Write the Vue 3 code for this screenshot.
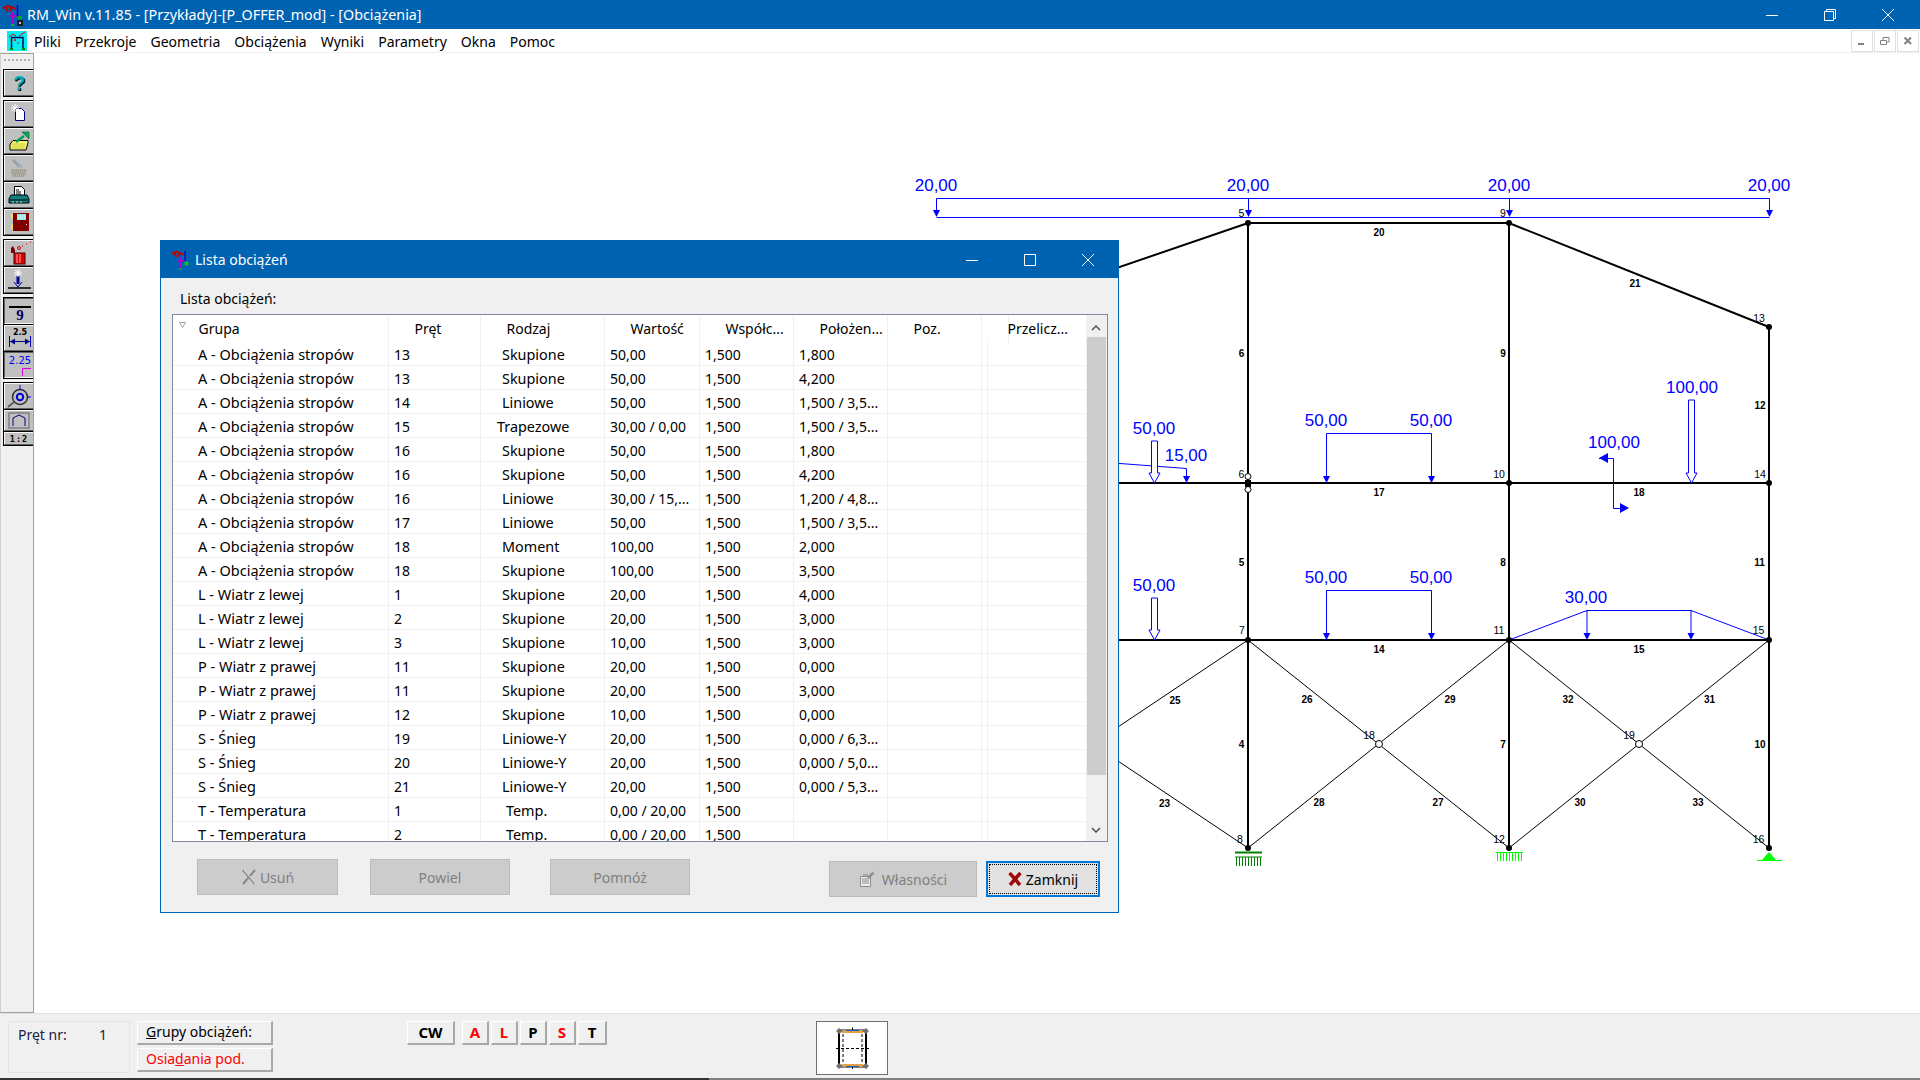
<template>
  <div class="app">
    <div class="titlebar">
      <svg class="app-ico" viewBox="0 0 22 24" width="22" height="24">
        <path d="M1 5L6 3L14 6M3 3L6 9M10 3L8 8" stroke="#c00000" stroke-width="2" fill="none" />
        <path d="M11 9V21M7 13H15" stroke="#b000d0" stroke-width="2" fill="none" />
        <path d="M15.5 2V13" stroke="#0000e0" stroke-width="1.5" />
        <rect x="9" y="21" width="3" height="2" fill="#00c000" />
        <rect x="16" y="13" width="4" height="3" fill="#00b000" />
        <rect x="15" y="17" width="6" height="6" fill="#202020" />
        <rect x="17" y="19" width="2" height="2" fill="#c0c0c0" />
      </svg>
      <span class="app-title">RM_Win v.11.85 - [Przykłady]-[P_OFFER_mod] - [Obciążenia]</span>
      <div class="win-btns">
        <svg width="12" height="12" viewBox="0 0 12 12"><path d="M0 6.5H12" stroke="#fff" /></svg>
        <svg width="12" height="12" viewBox="0 0 12 12"><path d="M.5 2.5h9v9h-9zM2.5 2.5V.5h9v9h-2" stroke="#fff" fill="none" /></svg>
        <svg width="12" height="12" viewBox="0 0 12 12"><path d="M0 0L12 12M12 0L0 12" stroke="#fff" /></svg>
      </div>
    </div>

    <div class="menubar">
      <svg class="menu-ico" viewBox="0 0 20 20" width="20" height="20">
        <rect width="20" height="20" fill="#00f0f0" />
        <path d="M4.5 18V6.5H16V18" stroke="#000060" stroke-width="1.5" fill="none" />
        <path d="M2 6L6 3L9 5M12 5L18 1" stroke="#e00000" fill="none" />
        <rect x="7" y="8" width="2" height="2" fill="#d02020" />
        <rect x="10" y="11" width="2" height="2" fill="#808080" />
        <rect x="3" y="17" width="3" height="2" fill="#008000" />
        <rect x="15" y="17" width="3" height="2" fill="#008000" />
      </svg>
      <span v-for="m in menus" :key="m" class="menu-item">{{ m }}</span>
      <div class="mdi-btns">
        <span class="mdi-btn"><svg width="10" height="10" viewBox="0 0 10 10"><rect x="1" y="7" width="6" height="2" fill="#808088" /></svg></span>
        <span class="mdi-btn"><svg width="10" height="10" viewBox="0 0 10 10"><path d="M.5 4.5h6v4h-6zM3 4V1.5h6V6H7" stroke="#808088" fill="none" /></svg></span>
        <span class="mdi-btn"><svg width="10" height="10" viewBox="0 0 10 10"><path d="M1.5 1.5L8 8M8 1.5L1.5 8" stroke="#808088" stroke-width="2" /></svg></span>
      </div>
    </div>

    <div class="middle">
      <div class="toolbar">
        <div class="grip"></div>
        <div class="tb-group">
          <div class="tb-btn">
            <span class="help">?</span>
          </div>
        </div>
        <div class="tb-group">
          <div class="tb-btn">
            <svg width="22" height="22" viewBox="0 0 22 22">
              <path d="M7.5 5.5h6l3 3v9h-9z" fill="#fff" stroke="#000080" />
              <path d="M7 1V9M3 5H11M4 2L10 8M10 2L4 8" stroke="#fff" />
            </svg>
          </div>
          <div class="tb-btn">
            <svg width="22" height="22" viewBox="0 0 22 22">
              <path d="M5 10.5h15v2L18 20H2V14z" fill="#f8f870" stroke="#000" />
              <path d="M3 14h14M4 16h13M3 18h14" stroke="#c8c840" />
              <path d="M8 12L16 6" stroke="#00a050" stroke-width="2.5" />
              <path d="M14 2h7v7z" fill="#00b050" stroke="#004020" stroke-width=".5" />
            </svg>
          </div>
          <div class="tb-btn">
            <svg width="22" height="22" viewBox="0 0 22 22">
              <path d="M3 12h16l-2 8H4z" fill="#a09c90" />
              <path d="M3 13h16M3 15h16M4 17h14M4 19h13" stroke="#c0c0c0" stroke-dasharray="1 1" />
              <path d="M5 3l6 6" stroke="#98a0a8" stroke-width="3" />
              <path d="M9 11h6l-2-5z" fill="#a8b0b8" />
            </svg>
          </div>
          <div class="tb-btn">
            <svg width="22" height="20" viewBox="0 0 22 20">
              <path d="M6.5 1.5h7l3 3v7h-10z" fill="#fff" stroke="#000" />
              <path d="M8 5h3M8 7h5M8 9h5" stroke="#000" />
              <path d="M3 10h16l2 4v4H1v-4z" fill="#108080" stroke="#000" />
              <path d="M2 15H20" stroke="#000" />
              <path d="M4 17h2M8 17h2M12 17h2" stroke="#a0e0e0" />
            </svg>
          </div>
          <div class="tb-btn">
            <svg width="22" height="22" viewBox="0 0 22 22">
              <rect x="5" y="2" width="16" height="18" fill="#800000" />
              <rect x="9" y="3" width="9" height="6" fill="#80f0f0" />
              <path d="M10 5h7M10 7h7" stroke="#fff" stroke-dasharray="1 1" />
              <rect x="3" y="3" width="2" height="5" fill="#f0e040" />
              <rect x="3" y="13" width="2" height="5" fill="#f0e040" />
              <rect x="18" y="13" width="1" height="1" fill="#fff" />
            </svg>
          </div>
        </div>
        <div class="tb-group">
          <div class="tb-btn">
            <svg width="24" height="24" viewBox="0 0 24 24">
              <path d="M4 7l2-2 2 4v3H4z" fill="#800000" />
              <rect x="7" y="12" width="11" height="11" fill="#e00000" stroke="#400000" />
              <path d="M10 13v9M13 13v9" stroke="#ffb0b0" />
              <circle cx="12" cy="7" r="1.5" fill="none" stroke="#d00000" />
              <path d="M15 5h1M19 3h1M23 1h1" stroke="#d00000" />
            </svg>
          </div>
          <div class="tb-btn">
            <svg width="24" height="24" viewBox="0 0 24 24">
              <path d="M11 8V16" stroke="#0000a0" stroke-width="3" />
              <path d="M7 14l4 5 4-5" stroke="#0000a0" fill="none" />
              <path d="M1 20H24" stroke="#000" stroke-width="1.5" />
              <path d="M11 1V9M7 5H15M8 2L14 8M14 2L8 8" stroke="#fff" />
            </svg>
          </div>
        </div>
        <div class="tb-group">
          <div class="tb-btn pressed">
            <svg width="24" height="24" viewBox="0 0 24 24">
              <path d="M2 8H24" stroke="#000" stroke-width="2" />
              <text x="13" y="21" class="tb-9">9</text>
            </svg>
          </div>
          <div class="tb-btn">
            <svg width="24" height="24" viewBox="0 0 24 24">
              <text x="13" y="9" class="tb-25">2.5</text>
              <path d="M2.5 10V21M23.5 10V21" stroke="#0000c0" />
              <path d="M3 15.5H23" stroke="#000080" />
              <path d="M3 15.5l5-3v6zM23 15.5l-5-3v6z" fill="#000080" />
            </svg>
          </div>
          <div class="tb-btn pressed">
            <svg width="24" height="24" viewBox="0 0 24 24">
              <text x="13" y="11" class="tb-225">2.25</text>
              <path d="M15.5 23V15.5H24" stroke="#e000e0" fill="none" />
            </svg>
          </div>
        </div>
        <div class="tb-group">
          <div class="tb-btn">
            <svg width="24" height="24" viewBox="0 0 24 24">
              <circle cx="13" cy="13" r="7.5" fill="#c0c0c0" stroke="#303030" stroke-width="1.5" />
              <circle cx="13" cy="13" r="3.2" fill="none" stroke="#0000d0" stroke-width="2" />
              <path d="M13 1V6M20 13H24" stroke="#0000d0" />
              <path d="M7 18L1 23" stroke="#606060" stroke-width="2" />
            </svg>
          </div>
          <div class="tb-btn short">
            <svg width="22" height="17" viewBox="0 0 22 17">
              <rect x="1" y="1" width="20" height="15" fill="none" stroke="#808080" stroke-width="1.5" />
              <path d="M5 14V6L11 3L17 6V14" fill="none" stroke="#000080" />
            </svg>
          </div>
          <div class="tb-btn tiny">1:2</div>
        </div>
      </div>

      <div class="workspace">
        <svg class="drawing" width="1886" height="960" viewBox="34 53 1886 960">
          <g fill="none" stroke="#000">
            <path v-for="(d, i) in thickLines" :key="i" :d="d" stroke-width="2" />
            <path v-for="(d, i) in thinLines" :key="'t' + i" :d="d" stroke-width="1" />
          </g>

          <g fill="none" stroke="#0000ff" stroke-width="1">
            <path v-for="(d, i) in loadLines" :key="i" :d="d" />
          </g>
          <path v-for="(x, i) in solidHeads" :key="'h' + i" fill="#0000ff" :d="headPath(x[0], x[1])" />
          <path v-for="(a, i) in hollowArrows" :key="'a' + i" fill="#fff" stroke="#0000ff" :d="hollowPath(a[0], a[1], a[2])" />
          <path fill="#0000ff" d="M1599 458l9-5v10zM1629 508l-9-5v10z" />

          <g class="load-txt">
            <text v-for="(t, i) in loadTexts" :key="i" :x="t[0]" :y="t[1]">{{ t[2] }}</text>
          </g>
          <g class="bar-txt">
            <text v-for="(t, i) in barTexts" :key="i" :x="t[0]" :y="t[1] + 3">{{ t[2] }}</text>
          </g>
          <g class="node-txt">
            <text v-for="(t, i) in nodeTexts" :key="i" :x="t[0]" :y="t[1] + 4">{{ t[2] }}</text>
          </g>

          <g fill="#000">
            <circle v-for="(n, i) in nodes" :key="i" :cx="n[0]" :cy="n[1]" r="3" />
            <rect x="1245" y="480" width="6" height="7" />
          </g>
          <g fill="#fff" stroke="#000">
            <circle v-for="(n, i) in hinges" :key="i" :cx="n[0]" :cy="n[1]" r="3" />
            <circle cx="1379" cy="744" r="3.5" />
            <circle cx="1639" cy="744" r="3.5" />
          </g>

          <g stroke="#008000" fill="none">
            <path d="M1235 852.5H1262" stroke-width="2" />
            <path d="M1235 857H1262" />
            <path :d="teeth(1236, 857, 866)" />
          </g>
          <g stroke="#00ff00" fill="none">
            <path d="M1496 852.5H1523" />
            <path :d="teeth(1497, 852, 861)" />
          </g>
          <path d="M1769 852L1762 860H1776Z" fill="#00ff00" />
          <path d="M1757 860.5H1782" stroke="#00ff00" />
        </svg>

        <div class="dialog">
          <div class="dlg-title">
            <svg width="20" height="22" viewBox="0 0 22 24">
              <path d="M1 5L6 3L14 6M3 3L6 9M10 3L8 8" stroke="#c00000" stroke-width="2" fill="none" />
              <path d="M11 9V21M7 13H15" stroke="#b000d0" stroke-width="2" fill="none" />
              <path d="M15.5 2V13" stroke="#0000e0" stroke-width="1.5" />
              <rect x="9" y="21" width="3" height="2" fill="#00c000" />
              <rect x="15" y="14" width="4" height="4" fill="#00d000" />
            </svg>
            <span>Lista obciążeń</span>
            <div class="dlg-btns">
              <svg width="12" height="12" viewBox="0 0 12 12"><path d="M0 6.5H12" stroke="#fff" /></svg>
              <svg width="12" height="12" viewBox="0 0 12 12"><path d="M.5.5h11v11H.5z" stroke="#fff" fill="none" /></svg>
              <svg width="12" height="12" viewBox="0 0 12 12"><path d="M0 0L12 12M12 0L0 12" stroke="#fff" /></svg>
            </div>
          </div>
          <div class="dlg-body">
            <div class="dlg-label">Lista obciążeń:</div>
            <div class="list">
              <div class="list-main">
                <div class="row head">
                  <div v-for="(h, i) in headers" :key="h" class="cell">
                    <svg v-if="i === 0" class="sort" width="7" height="6" viewBox="0 0 7 6"><path d="M.5.5H6.5L3.5 5.5Z" fill="none" stroke="#a0a0a0" /></svg>
                    {{ h }}
                  </div>
                </div>
                <div v-for="(r, n) in rows" :key="n" class="row">
                  <div class="cell c0">{{ r[0] }}</div>
                  <div class="cell c1">{{ r[1] }}</div>
                  <div class="cell c2" :class="{ trap: r[2] === 'Trapezowe', temp: r[2] === 'Temp.' }">{{ r[2] }}</div>
                  <div class="cell c3">{{ r[3] }}</div>
                  <div class="cell c4">{{ r[4] }}</div>
                  <div class="cell c5">{{ r[5] }}</div>
                  <div class="cell c6"></div>
                  <div class="cell c7"></div>
                </div>
              </div>
              <div class="scroll">
                <svg class="scroll-arrow" width="10" height="6" viewBox="0 0 10 6"><path d="M1 5L5 1L9 5" stroke="#505050" stroke-width="1.5" fill="none" /></svg>
                <div class="scroll-track"><div class="scroll-thumb"></div></div>
                <svg class="scroll-arrow" width="10" height="6" viewBox="0 0 10 6"><path d="M1 1L5 5L9 1" stroke="#505050" stroke-width="1.5" fill="none" /></svg>
              </div>
            </div>
            <div class="dlg-actions">
              <button class="btn dis usun">
                <svg width="16" height="16" viewBox="0 0 16 16"><path d="M2 1L14 15M14 1L2 15" stroke="#888" stroke-width="2" /><path d="M3 1L15 15" stroke="#eee" /></svg>
                Usuń
              </button>
              <button class="btn dis powiel">Powiel</button>
              <button class="btn dis pomnoz">Pomnóż</button>
              <button class="btn dis wlasnosci">
                <svg width="16" height="16" viewBox="0 0 16 16">
                  <path d="M1.5 5.5h10v10h-10z" fill="#ececec" stroke="#8c8c8c" />
                  <path d="M3 8h7M3 10h7M3 12h7" stroke="#8c8c8c" />
                  <path d="M9 7L14.5 1.5" stroke="#909090" stroke-width="2.5" />
                  <rect x="4" y="3" width="5" height="2" fill="#a8a8a8" />
                </svg>
                Własności
              </button>
              <button class="btn zamknij">
                <span class="focus">
                  <svg width="14" height="14" viewBox="0 0 14 14"><path d="M1.5 1C5 4.5 9 9.5 12 13M12.5 1C9 4.5 5 9.5 2 13" stroke="#a00808" stroke-width="3.5" fill="none" /></svg>
                  Zamknij
                </span>
              </button>
            </div>
          </div>
        </div>
      </div>
    </div>

    <div class="statusbar">
      <div class="pret"><span>Pręt nr:</span><span>1</span></div>
      <div class="group-btns">
        <div class="st-btn"><u>G</u>rupy obciążeń:</div>
        <div class="st-btn red">Osia<u>d</u>ania pod.</div>
      </div>
      <div class="cw-btns">
        <div class="st-btn load cw">CW</div>
        <div v-for="l in loadButtons" :key="l.name" class="st-btn load" :class="{ red: l.red }">{{ l.name }}</div>
      </div>
      <div class="section">
        <svg width="50" height="44" viewBox="0 0 50 44">
          <path d="M12 4.5h27v36H12z" fill="none" stroke="#000" stroke-width="2" />
          <path d="M16 8v29M35 8v29M9 22.5H42" stroke="#000" stroke-dasharray="3 2" fill="none" />
          <path d="M25.5 1.5V5M25.5 40V43" stroke="#000" />
          <rect x="15" y="4" width="21" height="3" fill="#e8a040" />
          <rect x="15" y="38" width="21" height="3" fill="#e8a040" />
          <path d="M19 4.5h13M19 40.5h13" stroke="#1060c0" />
          <path d="M9 5l3-3 4 3-4 3zM35 5l4-3 3 3-3 3zM9 40l3-3 4 3-4 3zM35 40l4-3 3 3-3 3z" fill="#707070" />
        </svg>
      </div>
    </div>
    <div class="bottom-line"></div>
  </div>
</template>

<script setup>
const menus = ['Pliki', 'Przekroje', 'Geometria', 'Obciążenia', 'Wyniki', 'Parametry', 'Okna', 'Pomoc']
const headers = ['Grupa', 'Pręt', 'Rodzaj', 'Wartość', 'Współc...', 'Położen...', 'Poz.', 'Przelicz...']

const A = 'A - Obciążenia stropów'
const L = 'L - Wiatr z lewej'
const P = 'P - Wiatr z prawej'
const S = 'S - Śnieg'
const T = 'T - Temperatura'
const rows = [
  [A, '13', 'Skupione', '50,00', '1,500', '1,800'],
  [A, '13', 'Skupione', '50,00', '1,500', '4,200'],
  [A, '14', 'Liniowe', '50,00', '1,500', '1,500 / 3,5...'],
  [A, '15', 'Trapezowe', '30,00 / 0,00', '1,500', '1,500 / 3,5...'],
  [A, '16', 'Skupione', '50,00', '1,500', '1,800'],
  [A, '16', 'Skupione', '50,00', '1,500', '4,200'],
  [A, '16', 'Liniowe', '30,00 / 15,...', '1,500', '1,200 / 4,8...'],
  [A, '17', 'Liniowe', '50,00', '1,500', '1,500 / 3,5...'],
  [A, '18', 'Moment', '100,00', '1,500', '2,000'],
  [A, '18', 'Skupione', '100,00', '1,500', '3,500'],
  [L, '1', 'Skupione', '20,00', '1,500', '4,000'],
  [L, '2', 'Skupione', '20,00', '1,500', '3,000'],
  [L, '3', 'Skupione', '10,00', '1,500', '3,000'],
  [P, '11', 'Skupione', '20,00', '1,500', '0,000'],
  [P, '11', 'Skupione', '20,00', '1,500', '3,000'],
  [P, '12', 'Skupione', '10,00', '1,500', '0,000'],
  [S, '19', 'Liniowe-Y', '20,00', '1,500', '0,000 / 6,3...'],
  [S, '20', 'Liniowe-Y', '20,00', '1,500', '0,000 / 5,0...'],
  [S, '21', 'Liniowe-Y', '20,00', '1,500', '0,000 / 5,3...'],
  [T, '1', 'Temp.', '0,00 / 20,00', '1,500', ''],
  [T, '2', 'Temp.', '0,00 / 20,00', '1,500', '']
]

const loadButtons = [
  { name: 'A', red: true },
  { name: 'L', red: true },
  { name: 'P', red: false },
  { name: 'S', red: true },
  { name: 'T', red: false }
]

// schemat ramy
const thickLines = [
  'M1000 308L1248 223H1509L1769 327V848',
  'M1248 223V848',
  'M1509 223V848',
  'M1000 483H1769',
  'M1000 640H1769'
]
const thinLines = [
  'M1248 640L1509 848',
  'M1509 640L1248 848',
  'M1509 640L1769 848',
  'M1769 640L1509 848',
  'M1248 640L1100 739',
  'M1248 848L1100 749'
]
const loadLines = [
  'M936.5 198.5H1769.5M936.5 217.5H1769.5',
  'M936.5 198.5V212M1248.5 198.5V212M1509.5 198.5V212M1769.5 198.5V212',
  'M1326.5 478V433.5H1431.5V478',
  'M1326.5 635V590.5H1431.5V635',
  'M1100 462L1186.5 468.5V478',
  'M1599 458.5H1613.5V508.5H1625',
  'M1509 640L1587 610.5H1691L1769 640',
  'M1587 610V635M1691 610V635'
]
const solidHeads = [
  [936.5, 217], [1248.5, 217], [1509.5, 217], [1769.5, 217],
  [1326.5, 483], [1431.5, 483], [1186.5, 483],
  [1326.5, 640], [1431.5, 640], [1587, 640], [1691, 640]
]
const hollowArrows = [
  [1154.5, 441, 483],
  [1154.5, 598, 640],
  [1691.5, 400, 483]
]
const loadTexts = [
  [936, 191, '20,00'], [1248, 191, '20,00'], [1509, 191, '20,00'], [1769, 191, '20,00'],
  [1154, 434, '50,00'], [1186, 461, '15,00'], [1326, 426, '50,00'], [1431, 426, '50,00'],
  [1614, 448, '100,00'], [1692, 393, '100,00'],
  [1154, 591, '50,00'], [1326, 583, '50,00'], [1431, 583, '50,00'], [1586, 603, '30,00']
]
const barTexts = [
  [1379, 233, '20'], [1635, 284, '21'], [1241.5, 354, '6'], [1503, 354, '9'], [1760, 406, '12'],
  [1379, 493, '17'], [1639, 493, '18'], [1241.5, 563, '5'], [1503, 563, '8'], [1759.5, 563, '11'],
  [1379, 650, '14'], [1639, 650, '15'],
  [1175, 701, '25'], [1307, 700, '26'], [1450, 700, '29'], [1568, 700, '32'], [1709.5, 700, '31'],
  [1241.5, 745, '4'], [1503, 745, '7'], [1760, 745, '10'],
  [1164.5, 804, '23'], [1319, 803, '28'], [1438, 803, '27'], [1580, 803, '30'], [1698, 803, '33']
]
const nodeTexts = [
  [1241.5, 213, '5'], [1503, 213, '9'], [1759, 318, '13'],
  [1241.5, 474, '6'], [1499, 474, '10'], [1760, 474, '14'],
  [1242, 630, '7'], [1499, 630, '11'], [1758.5, 630, '15'],
  [1369, 735, '18'], [1629, 735, '19'],
  [1240, 839, '8'], [1499, 839, '12'], [1758.5, 839, '16']
]
const nodes = [
  [1248, 223], [1509, 223], [1769, 327], [1509, 483], [1769, 483],
  [1248, 640], [1509, 640], [1769, 640], [1248, 848], [1509, 848], [1769, 848]
]
const hinges = [[1248, 476.5], [1248, 489.5]]

const headPath = (x, y) => `M${x} ${y}l-3.5 -7h7z`
const hollowPath = (x, top, bottom) =>
  `M${x - 3} ${top}h6v${bottom - top - 10}h2.5L${x} ${bottom}L${x - 5.5} ${bottom - 10}h2.5z`
const teeth = (x0, y0, y1) => {
  let d = ''
  for (let i = 0; i < 9; i++) d += `M${x0 + i * 3 + 0.5} ${y0}V${y1}`
  return d
}
</script>

<style scoped>
.app {
  width: 1920px;
  height: 1080px;
  display: flex;
  flex-direction: column;
  background: #fff;
  overflow: hidden;
  font-family: "Noto Sans", sans-serif;
  font-size: 14px;
  color: #000;
}

.titlebar {
  height: 29px;
  flex: none;
  display: flex;
  align-items: center;
  background: #0063b1;
  color: #fff;
  padding-left: 2px;
  font-size: 14.3px;
}

.app-ico {
  margin-right: 3px;
}

.win-btns {
  margin-left: auto;
  display: flex;
  gap: 46px;
  padding-right: 26px;
}

.menubar {
  height: 23px;
  flex: none;
  display: flex;
  align-items: center;
  padding-left: 7px;
  border-bottom: 1px solid #f0f0f0;
  background: #fff;
}

.menu-ico {
  margin-right: 7px;
}

.menu-item {
  margin-right: 14px;
  padding-top: 1px;
}

.mdi-btns {
  margin-left: auto;
  display: flex;
  gap: 1px;
  padding-right: 1px;
}

.mdi-btn {
  width: 22px;
  height: 22px;
  border: 1px solid #e0e0e0;
  box-sizing: border-box;
  display: flex;
  align-items: center;
  justify-content: center;
}

.middle {
  flex: 1;
  display: flex;
  min-height: 0;
}

.toolbar {
  width: 34px;
  flex: none;
  box-sizing: border-box;
  background: #f0f0f0;
  border: 1px solid #a0a0a0;
  border-width: 1px 1px 1px 0;
  border-left: 1px solid #d0d0d0;
  padding-left: 2px;
  display: flex;
  flex-direction: column;
  gap: 3px;
}

.grip {
  height: 12px;
  margin: 0 1px;
  background: repeating-linear-gradient(90deg, #b0b0b0 0 2px, transparent 2px 4px) 0 5px / 100% 2px no-repeat;
}

.tb-group {
  display: flex;
  flex-direction: column;
  gap: 1px;
  border: 1px solid #000;
  border-width: 1px 0 1px 1px;
  background: #000;
}

.tb-btn {
  background: #c0c0c0;
  border-top: 1px solid #f8f8f8;
  border-left: 1px solid #f8f8f8;
  border-bottom: 1px solid #606060;
  height: 24px;
  display: flex;
  align-items: center;
  justify-content: center;
  overflow: hidden;
}

.tb-btn.pressed {
  border-top-color: #606060;
  border-left-color: #606060;
  border-bottom-color: #f8f8f8;
}

.tb-btn.short {
  height: 19px;
}

.tb-btn.tiny {
  height: 11px;
  font: bold 8.5px "DejaVu Sans Mono", monospace;
  letter-spacing: 1px;
}

.help {
  font: bold 20px "Liberation Sans", sans-serif;
  color: #00b0c0;
  text-shadow: 1px 1px 0 #000;
}

.tb-9 {
  font: bold 15px "Liberation Serif", serif;
  fill: #000060;
  text-anchor: middle;
}

.tb-25 {
  font: bold 8px "DejaVu Sans", sans-serif;
  text-anchor: middle;
}

.tb-225 {
  font: 10px "DejaVu Sans", sans-serif;
  fill: #0000ff;
  text-anchor: middle;
}

.workspace {
  flex: 1;
  position: relative;
  min-width: 0;
  overflow: hidden;
}

.drawing {
  position: absolute;
  left: 0;
  top: 0;
}

.load-txt text {
  font: 17px "Liberation Sans", sans-serif;
  fill: #0000ff;
  text-anchor: middle;
}

.bar-txt text {
  font: bold 10px "Liberation Sans", sans-serif;
  fill: #000;
  text-anchor: middle;
}

.node-txt text {
  font: 10.5px "Liberation Sans", sans-serif;
  fill: #000;
  text-anchor: middle;
}

.dialog {
  position: absolute;
  left: 126px;
  top: 187px;
  width: 959px;
  height: 673px;
  box-sizing: border-box;
  border: 1px solid #0063b1;
  background: #f0f0f0;
  display: flex;
  flex-direction: column;
}

.dlg-title {
  height: 37px;
  flex: none;
  background: #0063b1;
  color: #fff;
  display: flex;
  align-items: center;
  padding-left: 10px;
  gap: 4px;
}

.dlg-btns {
  margin-left: auto;
  display: flex;
  gap: 46px;
  padding-right: 24px;
}

.dlg-body {
  flex: 1;
  padding: 0 11px;
  display: flex;
  flex-direction: column;
}

.dlg-label {
  height: 36px;
  box-sizing: border-box;
  padding: 4px 0 0 8px;
  line-height: 34px;
}

.list {
  height: 528px;
  flex: none;
  width: 936px;
  box-sizing: border-box;
  border: 1px solid #82879b;
  background: #fff;
  display: flex;
  overflow: hidden;
}

.list-main {
  width: 913px;
  flex: none;
  overflow: hidden;
}

.row {
  display: grid;
  grid-template-columns: 216px 92px 124px 95px 94px 94px 94px 4px;
  height: 24px;
  box-sizing: border-box;
  border-bottom: 1px solid #f0f0f0;
  line-height: 25px;
}

.row.head {
  height: 27px;
  border-bottom: none;
  line-height: 28px;
}

.row .cell {
  border-right: 1px solid #f0f0f0;
  white-space: nowrap;
  overflow: hidden;
  padding-left: 5px;
  position: relative;
}

.row.head .cell {
  padding-left: 25.5px;
  overflow: visible;
}

.row.head .cell:nth-child(n + 5) {
  overflow: hidden;
}

.row.head .cell:last-child {
  overflow: visible;
}

.row .cell.c0 {
  padding-left: 25px;
  font-size: 14.5px;
  line-height: 24px;
}

.row .cell.c2 {
  padding-left: 21px;
  font-size: 14.4px;
  line-height: 25px;
}

.row .cell.trap { padding-left: 16px; }
.row .cell.temp { padding-left: 25px; }

.sort {
  position: absolute;
  left: 6px;
  top: 7px;
}

.scroll {
  width: 21px;
  flex: none;
  display: flex;
  flex-direction: column;
  align-items: center;
  background: #f0f0f0;
  padding-top: 10px;
  box-sizing: border-box;
  padding-bottom: 8px;
}

.scroll-arrow {
  margin-right: 2px;
}

.scroll-track {
  flex: 1;
  align-self: stretch;
  padding: 6px 1px 52px;
}

.scroll-thumb {
  height: 100%;
  background: #cdcdcd;
}

.dlg-actions {
  display: flex;
  align-items: flex-start;
  padding: 17px 0 0 25px;
}

.btn {
  box-sizing: border-box;
  height: 36px;
  border: 1px solid #bcbcbc;
  background: #cccccc;
  color: #808080;
  font: inherit;
  display: flex;
  align-items: center;
  justify-content: center;
  gap: 3px;
  padding: 0;
}

.usun { width: 141px; margin-right: 32px; }
.powiel { width: 140px; margin-right: 40px; }
.pomnoz { width: 140px; margin-right: 139px; }
.wlasnosci { width: 148px; margin-right: 9px; margin-top: 2px; gap: 7px; }

.zamknij {
  width: 114px;
  margin-top: 2px;
  border: 2px solid #0078d7;
  background: #e1e1e1;
  color: #000;
  padding: 1px;
}

.focus {
  width: 100%;
  height: 100%;
  box-sizing: border-box;
  border: 1px dotted #000;
  display: flex;
  align-items: center;
  justify-content: center;
  gap: 4px;
}

.statusbar {
  height: 65px;
  flex: none;
  background: #f0f0f0;
  border-top: 1px solid #e0e0e0;
  box-sizing: border-box;
  display: flex;
  align-items: flex-start;
  padding: 7px 0 0 8px;
  position: relative;
}

.pret {
  width: 122px;
  height: 52px;
  box-sizing: border-box;
  border: 1px solid #e4e4e4;
  display: flex;
  justify-content: space-between;
  padding: 3px 22px 0 9px;
  color: #202040;
}

.group-btns {
  margin-left: 7px;
  display: flex;
  flex-direction: column;
  gap: 3px;
}

.st-btn {
  box-sizing: border-box;
  height: 24px;
  width: 136px;
  padding-left: 8px;
  line-height: 19px;
  background: #f0f0f0;
  border-top: 1px solid #fff;
  border-left: 1px solid #fff;
  border-right: 2px solid #a8a8a8;
  border-bottom: 2px solid #a8a8a8;
}

.st-btn.red {
  color: #ff0000;
}

.cw-btns {
  margin-left: 134px;
  display: flex;
  gap: 2px;
}

.st-btn.load {
  width: 27px;
  padding: 0;
  text-align: center;
  font-weight: 700;
  font-size: 15px;
  line-height: 21px;
}

.st-btn.load:last-child {
  width: 29px;
}

.st-btn.cw {
  width: 48px;
  margin-right: 5px;
}

.section {
  margin-left: 209px;
  width: 72px;
  height: 54px;
  box-sizing: border-box;
  background: #fff;
  border: 1px solid #707070;
  display: flex;
  align-items: center;
  justify-content: center;
}

.bottom-line {
  height: 2px;
  flex: none;
  background: linear-gradient(90deg, #333 0 709px, #808080 709px);
}
</style>

<style>
html, body {
  margin: 0;
  overflow: hidden;
}
</style>
